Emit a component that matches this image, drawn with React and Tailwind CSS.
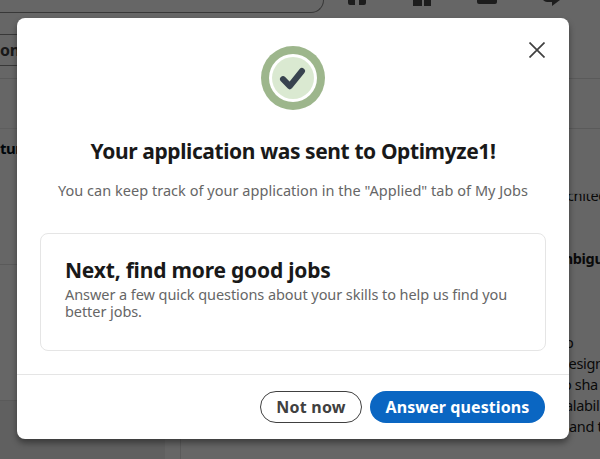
import React from "react";

function NavIcons() {
  return (
    <svg className="ml-[24px] h-[18px] w-[214px]" viewBox="0 0 214 18" fill="#4a4a4a">
      <path d="M0 0h7v5H2a2 2 0 0 1-2-2zM11 0h7v3a2 2 0 0 1-2 2h-5z" />
      <path d="M65 0h9v6h-9zM76 0h7v6h-7z" />
      <path d="M129 0h20v2a2 2 0 0 1-2 2h-16a2 2 0 0 1-2-2z" />
      <path d="M195 0h17l-8 6V2h-5q-2 0-4-2z" />
    </svg>
  );
}

function BackgroundPage() {
  return (
    <div className="flex h-[459px] w-[600px] flex-col overflow-hidden bg-white">
      <header className="flex h-[34px] shrink-0">
        <div className="h-[13px] w-[324px] rounded-br-[14px] border-r border-b border-[#8c8c8c]" />
        <NavIcons />
      </header>
      <div className="h-[45px] shrink-0 border-b border-[#e0e0e0]">
        <div className="h-[32px] w-[60px] border-y border-[#8c8c8c] text-[16px] leading-[31px] font-bold tracking-[-0.3px] text-[#404040]">
          on
        </div>
      </div>
      <div className="flex flex-1">
        <aside className="flex w-[165px] shrink-0 flex-col">
          <div className="h-[50px] border-b border-[#ebebeb]" />
          <div className="h-[136px] border-b border-[#e0e0e0] pt-[8px] text-[15px] leading-[22px] font-bold tracking-[-0.5px] text-[#00101c]">
            tur
          </div>
          <div className="h-[136px] border-b border-[#e0e0e0]" />
          <div className="flex-1 bg-[#f0f0f0]" />
        </aside>
        <main className="ml-[15px] flex-1 border-l border-[#e0e0e0]">
          <div className="h-[50px] border-b border-[#e0e0e0]" />
          <div className="mt-[64px] ml-[378px] w-[60px] text-[14.5px] leading-[21px] tracking-[-0.35px] whitespace-nowrap text-[#191919]">
            <p className="flex h-[13px] items-end overflow-hidden border-t border-[#ebebeb] pl-[8px]">chitec</p>
            <p className="mt-[42px] font-bold">mbigu</p>
            <p className="mt-[63px] pl-[6px]">o</p>
            <p className="pl-[1px]">design</p>
            <p className="pl-[4px]">o sha</p>
            <p className="pl-[6px]">alabili</p>
            <p className="pl-[10px]">and t</p>
          </div>
        </main>
      </div>
    </div>
  );
}

function SuccessIcon() {
  return (
    <svg className="h-[64px] w-[64px]" viewBox="0 0 64 64" fill="none">
      <circle cx="32" cy="32" r="32" fill="#9db68c" />
      <circle cx="32" cy="32" r="24" fill="#fff" />
      <circle cx="32" cy="32" r="21" fill="#dae9d1" />
      <path d="M22 33.2L28.8 40.2L41 25" stroke="#38434f" strokeWidth="6" strokeLinecap="round" strokeLinejoin="round" />
    </svg>
  );
}

function Dialog() {
  return (
    <section
      role="dialog"
      className="flex h-[421px] w-[552px] flex-col rounded-[8px] bg-white shadow-[0_4px_6px_rgba(0,0,0,0.4)]"
    >
      <div className="relative flex h-[356px] flex-col items-center px-[23px] pt-[28px]">
        <button aria-label="Dismiss" className="absolute top-[24px] right-[24px]">
          <svg className="h-[16px] w-[16px]" viewBox="0 0 16 16" stroke="#404040" strokeWidth="1.7">
            <path d="M0.5 0.5L15.5 15.5M15.5 0.5L0.5 15.5" />
          </svg>
        </button>
        <SuccessIcon />
        <h1 className="mt-[26px] text-[21px] leading-[30px] font-bold tracking-[-0.4px] whitespace-nowrap text-[#191919]">
          Your application was sent to Optimyze1!
        </h1>
        <p className="mt-[14px] text-[14.5px] leading-[20px] tracking-[0.03px] whitespace-nowrap text-[#666]">
          You can keep track of your application in the "Applied" tab of My Jobs
        </p>
        <div className="mt-[33px] h-[118px] w-full rounded-[8px] border border-[#e5e5e5] pt-[21px] pl-[24px]">
          <h2 className="text-[21px] leading-[30px] font-bold tracking-[-0.2px] whitespace-nowrap text-[#191919]">
            Next, find more good jobs
          </h2>
          <div className="mt-[1px] text-[14.5px] leading-[17px] tracking-[-0.07px] whitespace-nowrap text-[#666]">
            <p>Answer a few quick questions about your skills to help us find you</p>
            <p>better jobs.</p>
          </div>
        </div>
      </div>
      <footer className="flex flex-1 items-center justify-end gap-[8px] border-t border-[#e5e5e5] pr-[24px]">
        <button className="flex h-[32px] w-[102px] items-center justify-center rounded-full border border-[#404040] text-[16px] font-bold tracking-[0.25px] whitespace-nowrap text-[#404040]">
          Not now
        </button>
        <button className="flex h-[32px] w-[175px] items-center justify-center rounded-full bg-[#0a66c2] text-[16px] font-bold tracking-[0.1px] whitespace-nowrap text-white">
          Answer questions
        </button>
      </footer>
    </section>
  );
}

export default function App() {
  return (
    <div className="relative h-[459px] w-[600px] overflow-hidden font-['Noto_Sans','Open_Sans',sans-serif]">
      <BackgroundPage />
      <div className="absolute inset-0 bg-black/60 pt-[18px] pl-[17px]">
        <Dialog />
      </div>
    </div>
  );
}
